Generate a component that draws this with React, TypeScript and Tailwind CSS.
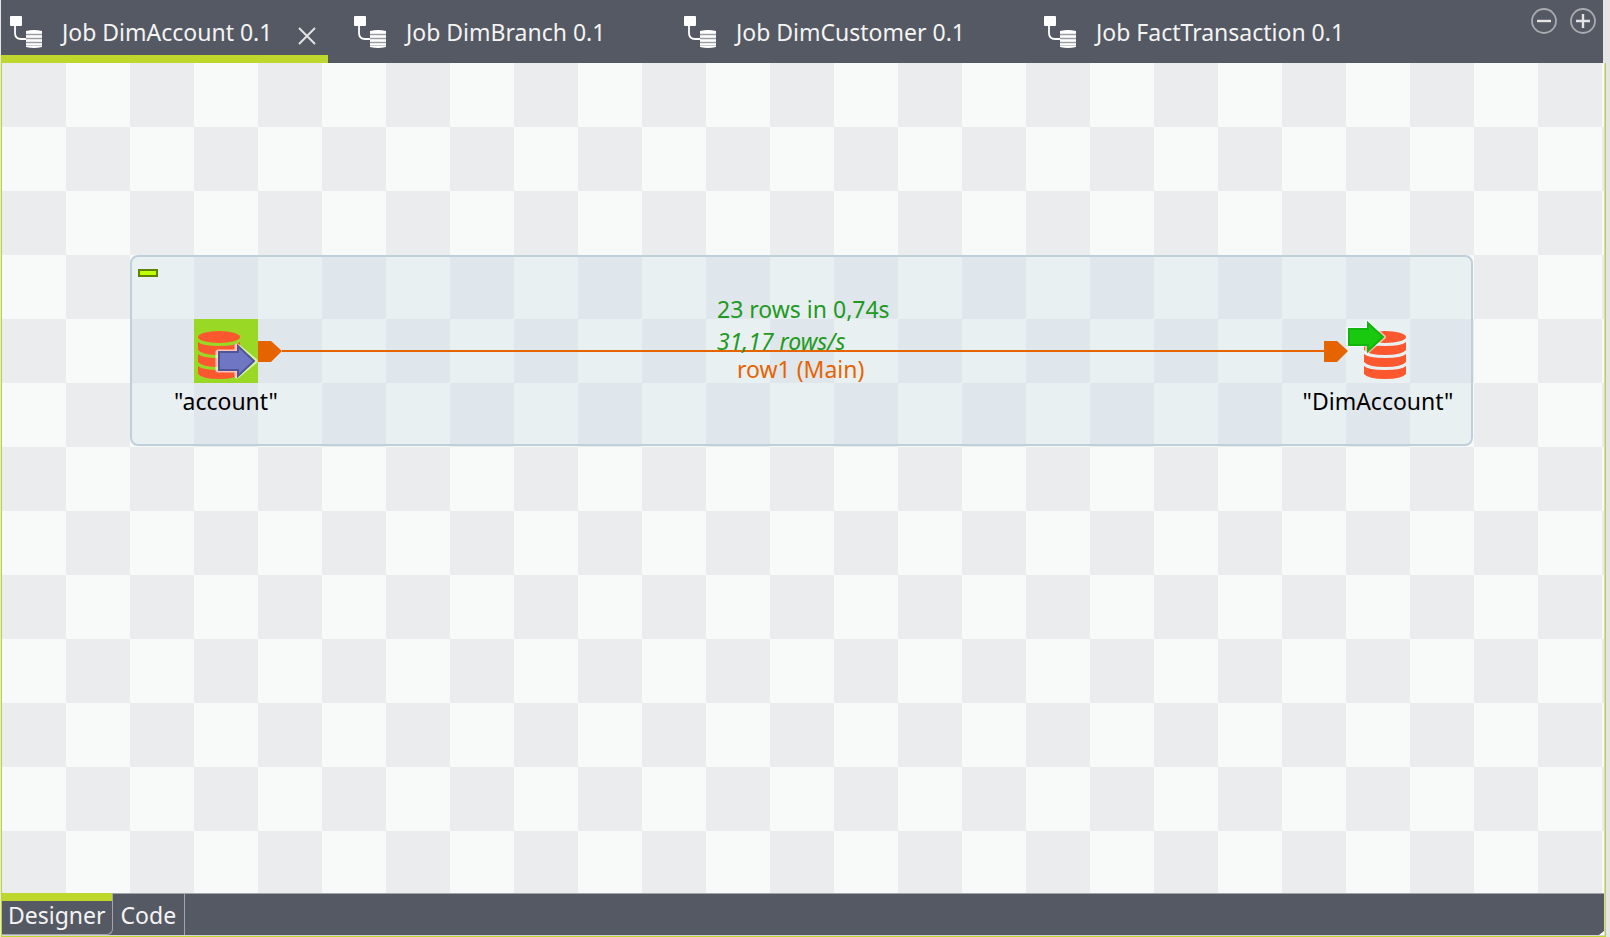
import React, { useState } from "react";

const jobs = [
  { name: "Job DimAccount 0.1", width: "w-[327px]" },
  { name: "Job DimBranch 0.1", width: "w-[313px]" },
  { name: "Job DimCustomer 0.1", width: "w-[343px]" },
  { name: "Job FactTransaction 0.1", width: "w-[333px]" },
];

function JobIcon() {
  return (
    <svg viewBox="0 0 32 32" className="size-8 shrink-0" aria-hidden="true">
      <rect x="0" y="0" width="12" height="10" rx="1" fill="#fff" />
      <path d="M5 9v8q0 6 6 6h6" fill="none" stroke="#fff" strokeWidth="1.8" />
      <path d="M16 15q8-2 16 0v16q-8 2-16 0z" fill="#fff" />
      <path d="M16 18.5h16M16 22.5h16M16 26.5h16" stroke="#9c9ea5" strokeWidth="1.3" />
      <path d="M16 29.5h16" stroke="#c9cacd" strokeWidth="1" />
    </svg>
  );
}

function Database({ x, y }: { x: number; y: number }) {
  return (
    <g transform={`translate(${x} ${y})`} fill="#fc5830">
      <ellipse cx="21" cy="6" rx="21" ry="6" />
      <path d="M0 11q4 4 21 4t21-4v8q-4 5-21 5T0 19z" />
      <path d="M0 23q4 4 21 4t21-4v8q-4 5-21 5T0 31z" />
      <path d="M0 35q4 4 21 4t21-4v8q-4 5-21 5T0 43z" />
    </g>
  );
}

function InputIcon() {
  return (
    <svg viewBox="0 0 64 64" className="size-16" aria-hidden="true">
      <rect width="64" height="64" fill="#99d926" />
      <Database x={4} y={12} />
      <path d="M24 33h19v-6l18 15-18 15v-6H24z" fill="none" stroke="#fff" strokeOpacity=".65" strokeWidth="5" strokeLinejoin="round" />
      <path d="M25 33h19v-6l16 15-16 15v-6H25z" fill="#6f77c4" stroke="#4f5596" strokeWidth="2" />
    </svg>
  );
}

function OutputIcon() {
  return (
    <svg viewBox="0 0 64 64" className="size-16" aria-hidden="true">
      <Database x={18} y={12} />
      <path d="M2 10h19V3l17 15-17 15v-7H2z" fill="none" stroke="#fff" strokeOpacity=".6" strokeWidth="4" strokeLinejoin="round" />
      <path d="M3 10h19V4l15 14-15 14v-6H3z" fill="#18c910" stroke="#12b50c" strokeWidth="2" />
    </svg>
  );
}

function Port() {
  return (
    <svg viewBox="0 0 24 21" className="h-[21px] w-6 shrink-0" aria-hidden="true">
      <path d="M0 0h13l11 10-11 11H0z" fill="#e66400" />
    </svg>
  );
}

export default function App() {
  const [job, setJob] = useState(0);
  const [view, setView] = useState("Designer");

  return (
    <div className="flex h-screen flex-col bg-[#e5e5e5] pr-1 pl-px font-['Noto_Sans','Open_Sans',sans-serif] text-[23px] leading-8">
      <header className="mr-[3px] flex h-[63px] shrink-0 items-stretch bg-[#555963]">
        <nav className="flex min-w-0 grow gap-[17px]">
          {jobs.map((j, i) => (
            <div
              key={j.name}
              className={`flex shrink-0 items-start border-b-8 pl-[9px] ${j.width} ${i === job ? "border-[#bfd72d]" : "border-transparent"}`}
            >
              <button type="button" onClick={() => setJob(i)} className="flex h-[55px] items-center gap-5 pt-2 whitespace-nowrap text-[#f4f4f4]">
                <JobIcon />
                {j.name}
              </button>
              {i === job && (
                <button type="button" aria-label="Close" className="ml-[26px] flex h-[55px] items-center pt-4">
                  <svg viewBox="0 0 18 18" className="size-[18px]" aria-hidden="true">
                    <path d="M1 1l16 16M17 1L1 17" stroke="#e4e4e6" strokeWidth="2" />
                  </svg>
                </button>
              )}
            </div>
          ))}
        </nav>
        <div className="flex items-start gap-[13px] pt-2 pr-[7px]">
          <button type="button" aria-label="Minimize">
            <svg viewBox="0 0 26 26" className="size-[26px]" fill="none" aria-hidden="true">
              <circle cx="13" cy="13" r="12" stroke="#a9abb0" strokeWidth="1.8" />
              <path d="M6 13h14" stroke="#e4e4e6" strokeWidth="2.4" />
            </svg>
          </button>
          <button type="button" aria-label="Maximize">
            <svg viewBox="0 0 26 26" className="size-[26px]" fill="none" aria-hidden="true">
              <circle cx="13" cy="13" r="12" stroke="#a9abb0" strokeWidth="1.8" />
              <path d="M6 13h14M13 6v14" stroke="#e4e4e6" strokeWidth="2.4" />
            </svg>
          </button>
        </div>
      </header>

      <div className="flex min-h-0 grow flex-col border-r border-b border-l border-[#bfd72d] bg-[#d4d4d8] pr-px pb-px">
        <main className="relative min-h-0 grow overflow-hidden bg-[repeating-conic-gradient(#f8faf9_0_25%,#ebecee_0_50%)] bg-[length:128px_128px]">
          <section className="absolute top-[192px] left-32 h-[191px] w-[1343px] rounded-lg border-2 border-[#c0d0db] bg-[#d0e0e8]/40">
            <button type="button" aria-label="Collapse" className="absolute top-3 left-1.5 h-2 w-5 border-2 border-[#5f8000] bg-[#bfff00]" />
          </section>
          <div className="absolute top-[278px] left-64 flex w-[1090px] items-start">
            <Port />
            <div className="mt-[9px] h-0.5 grow bg-[#e66400]" />
            <Port />
          </div>
          <div className="absolute top-[230px] left-[715px] whitespace-nowrap text-[#229a22]">
            <p>23 rows in 0,74s</p>
            <p className="italic">31,17 rows/s</p>
          </div>
          <p className="absolute top-[294px] left-[735px] leading-6 whitespace-nowrap text-[#e66400]">row1 (Main)</p>
          <div className="absolute top-64 left-36 flex w-40 flex-col items-center gap-0.5">
            <InputIcon />
            <span>"account"</span>
          </div>
          <div className="absolute top-64 left-[1296px] flex w-40 flex-col items-center gap-0.5">
            <OutputIcon />
            <span>"DimAccount"</span>
          </div>
        </main>

        <footer className="flex h-[42px] shrink-0 items-stretch border-t border-[#a3a5aa] bg-[#555963] text-[#f4f4f4]">
          {["Designer", "Code"].map((v) => (
            <button
              type="button"
              key={v}
              onClick={() => setView(v)}
              className={`border-r border-[#a3a5aa] ${v === view ? "-mt-px rounded-br-md border-b px-1.5 pt-0.5 shadow-[inset_0_8px_0_#bfd72d]" : "px-2"}`}
            >
              {v}
            </button>
          ))}
          <svg viewBox="0 0 5 4" className="ml-auto h-1 w-[5px] self-end" aria-hidden="true">
            <path d="M5 0v4H0z" fill="#fff" />
          </svg>
        </footer>
      </div>
    </div>
  );
}
